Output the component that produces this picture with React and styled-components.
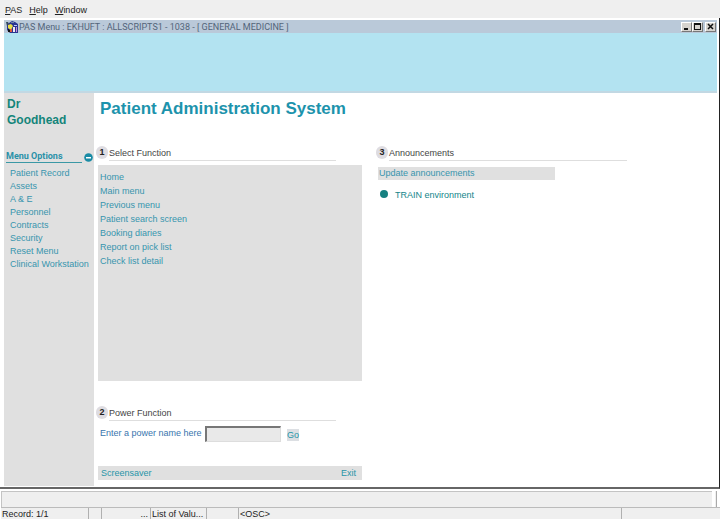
import React from "react";
import styled, { createGlobalStyle } from "styled-components";

const GlobalStyle = createGlobalStyle`
  * { box-sizing: border-box; }
  body {
    margin: 0;
    background: #fff;
    color: #222;
    font: 9px/13px "Liberation Sans", Arial, sans-serif;
  }
  button, input { font: inherit; border-radius: 0; }
  ul { list-style: none; margin: 0; padding: 0; }
  h1, h2, p { margin: 0; }
`;

const Shell = styled.div`
  display: flex;
  flex-direction: column;
  min-height: 100vh;
`;

const MenuBar = styled.nav`
  display: flex;
  gap: 7px;
  height: 18px;
  padding: 3px 5px 0;
  background: #efefef;
`;

const PlainButton = styled.button`
  padding: 0;
  border: 0;
  background: none;
  color: inherit;
  line-height: 13px;
  text-align: left;
  cursor: pointer;
`;

const Workspace = styled.div`
  flex: 1;
  display: flex;
  flex-direction: column;
  padding: 2px 2px 1px 4px;
  border-right: 1px solid #222;
  border-bottom: 2px solid #666;
`;

const TitleBar = styled.header`
  display: flex;
  align-items: center;
  height: 13px;
  padding: 0 1px 0 2px;
  background: #bac9d9;
  color: #536579;
  font-family: Roboto, sans-serif;
`;

const TitleText = styled.span`
  flex: 1;
  padding-top: 1px;
`;

const WindowButtons = styled.div`
  display: flex;
`;

const WindowButton = styled.button`
  display: block;
  width: 11px;
  height: 10px;
  margin-left: ${(p) => (p.$apart ? "2px" : "0")};
  padding: 0;
  border: 1px solid;
  border-color: #fff #777 #777 #fff;
  background: #d6d3ce;
  svg { display: block; }
`;

const Banner = styled.div`
  height: 60px;
  background: #b3e3f1;
  border-bottom: 2px solid #c2d8e3;
`;

const Body = styled.div`
  flex: 1;
  display: grid;
  grid-template-columns: 90px 1fr;
`;

const Sidebar = styled.aside`
  padding: 3px 0 0 3px;
  background: #e0e0e0;
`;

const UserName = styled.p`
  height: 54px;
  color: #13857a;
  font-size: 12px;
  font-weight: bold;
  line-height: 16px;
`;

const SideHeading = styled.div`
  display: flex;
  gap: 2px;
  margin-left: -1px;
`;

const SideTitle = styled.h2`
  width: 76px;
  height: 13px;
  border-bottom: 1px solid #3a98a5;
  color: #2a91a8;
  font-family: Roboto, sans-serif;
  font-size: 9px;
  line-height: 12px;
`;

const CollapseButton = styled(PlainButton)`
  height: 9px;
  margin-top: 3px;
  svg { display: block; }
`;

const SideList = styled.ul`
  padding: 4px 0 0 3px;
`;

const SideLink = styled.a`
  display: block;
  color: #3795ae;
  line-height: 13px;
  text-decoration: none;
  white-space: nowrap;
`;

const Main = styled.main`
  padding: 5px 3px 6px 4px;
`;

const Title = styled.h1`
  height: 48px;
  padding-left: 2px;
  color: #1c93ac;
  font-size: 17px;
  line-height: 22px;
`;

const Columns = styled.div`
  display: grid;
  grid-template-columns: minmax(0, 264fr) minmax(0, 251fr) minmax(0, 69fr);
  column-gap: 16px;
`;

const Column = styled.div`
  display: flex;
  flex-direction: column;
`;

const SectionHead = styled.div`
  display: flex;
  gap: 1px;
  height: 15px;
  margin: 0 ${(p) => (p.$wide ? "2px" : "26px")} 0 -2px;
`;

const StepNumber = styled.span`
  width: 12px;
  height: 13px;
  border-radius: 6px;
  background: #dedce1;
  font-weight: bold;
  text-align: center;
`;

const SectionTitle = styled.h2`
  flex: 1;
  border-bottom: 1px solid #dedede;
  color: #444;
  font-size: 9px;
  font-weight: normal;
  line-height: 14px;
`;

const FunctionPanel = styled.ul`
  height: 216px;
  margin: 4px 0 25px;
  padding: 5px 2px;
  background: #e0e0e0;
`;

const FunctionLink = styled(SideLink)`
  line-height: 14px;
`;

const PowerForm = styled.form`
  display: flex;
  align-items: center;
  height: 17px;
  margin-top: 4px;
  padding-left: 2px;
`;

const PowerLabel = styled.label`
  width: 105px;
  color: #3975ae;
`;

const PowerInput = styled.input`
  width: 76px;
  height: 16px;
  padding: 0 2px;
  border: 1px solid;
  border-width: 2px 1px 1px 2px;
  border-color: #777 #ddd #ddd #777;
  background: #e9e9e9;
  outline-offset: 1px;
`;

const GoButton = styled(PlainButton)`
  height: 12px;
  margin: 2px 0 0 6px;
  background: #dcdfe3;
  color: #2795a8;
`;

const FooterBar = styled.div`
  display: flex;
  justify-content: space-between;
  height: 14px;
  margin-top: 24px;
  padding: 0 6px 0 3px;
  background: #e0e0e0;
  color: #2795a8;
`;

const UpdateButton = styled(PlainButton)`
  width: 177px;
  height: 13px;
  margin-top: 6px;
  padding-left: 1px;
  background: #e0e0e0;
  color: #3795ae;
`;

const Announcement = styled.p`
  display: flex;
  gap: 7px;
  margin: 9px 0 0 2px;
  color: #13858a;
`;

const Bullet = styled.span`
  width: 8px;
  height: 8px;
  border-radius: 4px;
  margin-top: 1px;
  background: #168080;
`;

const MessageRow = styled.div`
  display: flex;
  gap: 3px;
  height: 16px;
  margin: 2px 3px 0 1px;
`;

const Message = styled.div`
  flex: 1;
  border: 1px solid #c4c4c4;
  border-right: 0;
  border-bottom: 0;
  background: #efefef;
`;

const MessageEnd = styled.div`
  width: 2px;
  background: #efefef;
  border-right: 1px solid #aaa;
`;

const StatusBar = styled.footer`
  display: grid;
  grid-template-columns: 88px 13px 49px 56px 32px 1fr 98px;
  margin-left: 1px;
  background: #efefef;
  border-top: 1px solid #bbb;
`;

const StatusCell = styled.span`
  padding: 0 2px 0 1px;
  border-right: ${(p) => (p.$last ? "0" : "1px solid #b0b0b0")};
  line-height: 12px;
  text-align: ${(p) => (p.$end ? "right" : "left")};
  white-space: nowrap;
`;

const sideItems = ["Patient Record", "Assets", "A & E", "Personnel", "Contracts", "Security", "Reset Menu", "Clinical Workstation"];
const functions = ["Home", "Main menu", "Previous menu", "Patient search screen", "Booking diaries", "Report on pick list", "Check list detail"];

function AppIcon() {
  return (
    <svg width="13" height="12" viewBox="0 0 13 12" aria-hidden="true">
      <path d="M0 1h2l1 2v3L1 5z" fill="#34495c" />
      <path d="M3 2l3-2 3 1 3 2v9H4L1 9V5z" fill="#2b3590" />
      <path d="M5 1h3v1H5z" fill="#6d88a8" />
      <path d="M2 4l3-1 2 2-2 4-3-2z" fill="#e9df45" />
      <path d="M8 4h3v1H8z" fill="#b8c8ff" />
      <path d="M7 6h2v5H7z" fill="#f3e9f2" />
      <path d="M10 6h1v5h-1z" fill="#c78ad5" />
      <path d="M4 8h2v3H4z" fill="#df593e" />
      <path d="M2 8h1v1h1v2H2z" fill="#111" />
    </svg>
  );
}

function MenuItem({ label }) {
  return <PlainButton type="button"><u>{label[0]}</u>{label.slice(1)}</PlainButton>;
}

function Section({ number, title, wide }) {
  return (
    <SectionHead $wide={wide}>
      <StepNumber>{number}</StepNumber>
      <SectionTitle>{title}</SectionTitle>
    </SectionHead>
  );
}

export default function App() {
  return (
    <Shell>
      <GlobalStyle />
      <MenuBar>
        {["PAS", "Help", "Window"].map((label) => <MenuItem key={label} label={label} />)}
      </MenuBar>
      <Workspace>
        <TitleBar>
          <AppIcon />
          <TitleText>PAS Menu : EKHUFT : ALLSCRIPTS1 - 1038 - [ GENERAL MEDICINE ]</TitleText>
          <WindowButtons>
            <WindowButton type="button" aria-label="Minimize">
              <svg width="9" height="8"><path d="M2 5h4v2H2z" fill="#111" /></svg>
            </WindowButton>
            <WindowButton type="button" aria-label="Maximize">
              <svg width="9" height="8"><path d="M1 0h7v7H1zM2 2v4h5V2z" fill="#111" fillRule="evenodd" /></svg>
            </WindowButton>
            <WindowButton type="button" aria-label="Close" $apart>
              <svg width="9" height="8"><path d="M2 1l5 5M7 1L2 6" stroke="#111" strokeWidth="1.5" /></svg>
            </WindowButton>
          </WindowButtons>
        </TitleBar>
        <Banner />
        <Body>
          <Sidebar>
            <UserName>Dr<br />Goodhead</UserName>
            <SideHeading>
              <SideTitle>Menu Options</SideTitle>
              <CollapseButton type="button" aria-label="Collapse menu options">
                <svg width="9" height="9" viewBox="0 0 9 9">
                  <circle cx="4.5" cy="4.5" r="4.3" fill="#198ba5" />
                  <path d="M2 4h5v1.5H2z" fill="#fff" />
                </svg>
              </CollapseButton>
            </SideHeading>
            <SideList>
              {sideItems.map((item) => <li key={item}><SideLink href="#">{item}</SideLink></li>)}
            </SideList>
          </Sidebar>
          <Main>
            <Title>Patient Administration System</Title>
            <Columns>
              <Column>
                <Section number="1" title="Select Function" />
                <FunctionPanel>
                  {functions.map((item) => <li key={item}><FunctionLink href="#">{item}</FunctionLink></li>)}
                </FunctionPanel>
                <Section number="2" title="Power Function" />
                <PowerForm onSubmit={(e) => e.preventDefault()}>
                  <PowerLabel htmlFor="power">Enter a power name here</PowerLabel>
                  <PowerInput id="power" type="text" />
                  <GoButton type="submit">Go</GoButton>
                </PowerForm>
                <FooterBar>
                  <PlainButton type="button">Screensaver</PlainButton>
                  <PlainButton type="button">Exit</PlainButton>
                </FooterBar>
              </Column>
              <Column>
                <Section number="3" title="Announcements" wide />
                <UpdateButton type="button">Update announcements</UpdateButton>
                <Announcement><Bullet />TRAIN environment</Announcement>
              </Column>
            </Columns>
          </Main>
        </Body>
      </Workspace>
      <MessageRow>
        <Message />
        <MessageEnd />
      </MessageRow>
      <StatusBar>
        <StatusCell>Record: 1/1</StatusCell>
        <StatusCell />
        <StatusCell $end>...</StatusCell>
        <StatusCell>List of Valu...</StatusCell>
        <StatusCell />
        <StatusCell>&lt;OSC&gt;</StatusCell>
        <StatusCell $last />
      </StatusBar>
    </Shell>
  );
}
